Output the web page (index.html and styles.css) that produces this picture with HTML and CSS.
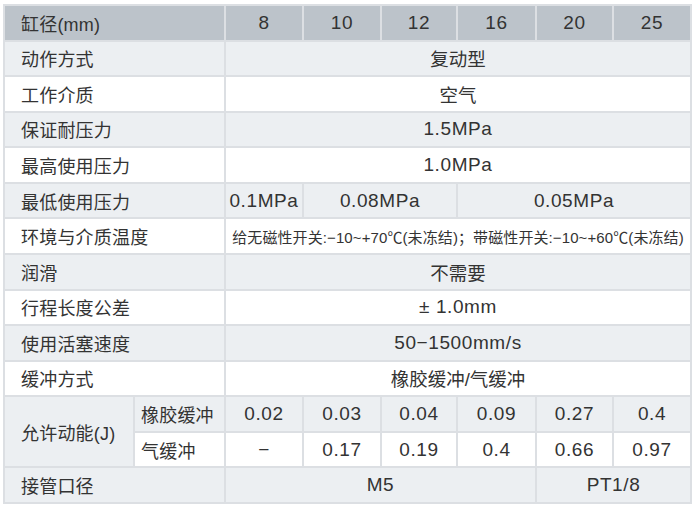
FILE: index.html
```html
<!DOCTYPE html>
<html lang="zh-CN">
<head>
<meta charset="utf-8">
<link rel="stylesheet" href="styles.css">
</head>
<body>
<table class="spec">
  <colgroup>
    <col class="c-label"><col class="c-sub">
    <col class="c8"><col class="c10"><col class="c12"><col class="c16"><col class="c20"><col class="c25">
  </colgroup>
  <thead>
    <tr class="head">
      <th colspan="2" class="label">缸径(mm)</th>
      <th>8</th><th>10</th><th>12</th><th>16</th><th>20</th><th>25</th>
    </tr>
  </thead>
  <tbody>
    <tr class="grey"><td colspan="2" class="label">动作方式</td><td colspan="6" class="cjk">复动型</td></tr>
    <tr><td colspan="2" class="label">工作介质</td><td colspan="6" class="cjk">空气</td></tr>
    <tr class="grey"><td colspan="2" class="label">保证耐压力</td><td colspan="6">1.5MPa</td></tr>
    <tr><td colspan="2" class="label">最高使用压力</td><td colspan="6">1.0MPa</td></tr>
    <tr class="grey"><td colspan="2" class="label">最低使用压力</td><td>0.1MPa</td><td colspan="2">0.08MPa</td><td colspan="3">0.05MPa</td></tr>
    <tr><td colspan="2" class="label">环境与介质温度</td><td colspan="6" class="small">给无磁性开关:−10~+70℃(未冻结)；带磁性开关:−10~+60℃(未冻结)</td></tr>
    <tr class="grey"><td colspan="2" class="label">润滑</td><td colspan="6" class="cjk">不需要</td></tr>
    <tr><td colspan="2" class="label">行程长度公差</td><td colspan="6">± 1.0mm</td></tr>
    <tr class="grey"><td colspan="2" class="label">使用活塞速度</td><td colspan="6">50−1500mm/s</td></tr>
    <tr><td colspan="2" class="label">缓冲方式</td><td colspan="6" class="cjk">橡胶缓冲/气缓冲</td></tr>
    <tr class="grey"><td rowspan="2" class="label">允许动能(J)</td><td class="sub">橡胶缓冲</td><td>0.02</td><td>0.03</td><td>0.04</td><td>0.09</td><td>0.27</td><td>0.4</td></tr>
    <tr><td class="sub">气缓冲</td><td>−</td><td>0.17</td><td>0.19</td><td>0.4</td><td>0.66</td><td>0.97</td></tr>
    <tr class="grey"><td colspan="2" class="label">接管口径</td><td colspan="4">M5</td><td colspan="2">PT1/8</td></tr>
  </tbody>
</table>
</body>
</html>
```
FILE: styles.css
```css
html, body {
  margin: 0;
  padding: 0;
  background: #ffffff;
}
body {
  padding: 4px 0 0 3px;
  font-family: "Liberation Sans", "Noto Sans CJK SC", sans-serif;
  color: #333333;
}
.spec {
  border-collapse: collapse;
  table-layout: fixed;
  width: 687px;
  font-size: 19px;
  letter-spacing: 0.6px;
}
.c-label { width: 130px; }
.c-sub { width: 91px; }
.c8 { width: 78px; }
.c10 { width: 78px; }
.c12 { width: 76px; }
.c16 { width: 79px; }
.c20 { width: 77px; }
.c25 { width: 78px; }
.spec th, .spec td {
  border: 2px solid #dcdfe3;
  height: 35.57px;
  padding: 0;
  text-align: center;
  vertical-align: middle;
  font-weight: normal;
  white-space: nowrap;
  box-sizing: border-box;
}
.spec tr {
  height: 35.57px;
}
.head th {
  background: #bcc3ca;
}
.grey td {
  background: #eceff2;
}
.spec .label {
  text-align: left;
  padding-left: 16px;
  font-size: 18px;
  letter-spacing: 0.2px;
}
.spec .sub {
  text-align: left;
  padding-left: 6px;
  font-size: 18px;
  letter-spacing: 0.2px;
}
.spec .cjk {
  font-size: 18.5px;
  letter-spacing: 0;
}
.spec .small {
  font-size: 15px;
  letter-spacing: 0.1px;
}
```
